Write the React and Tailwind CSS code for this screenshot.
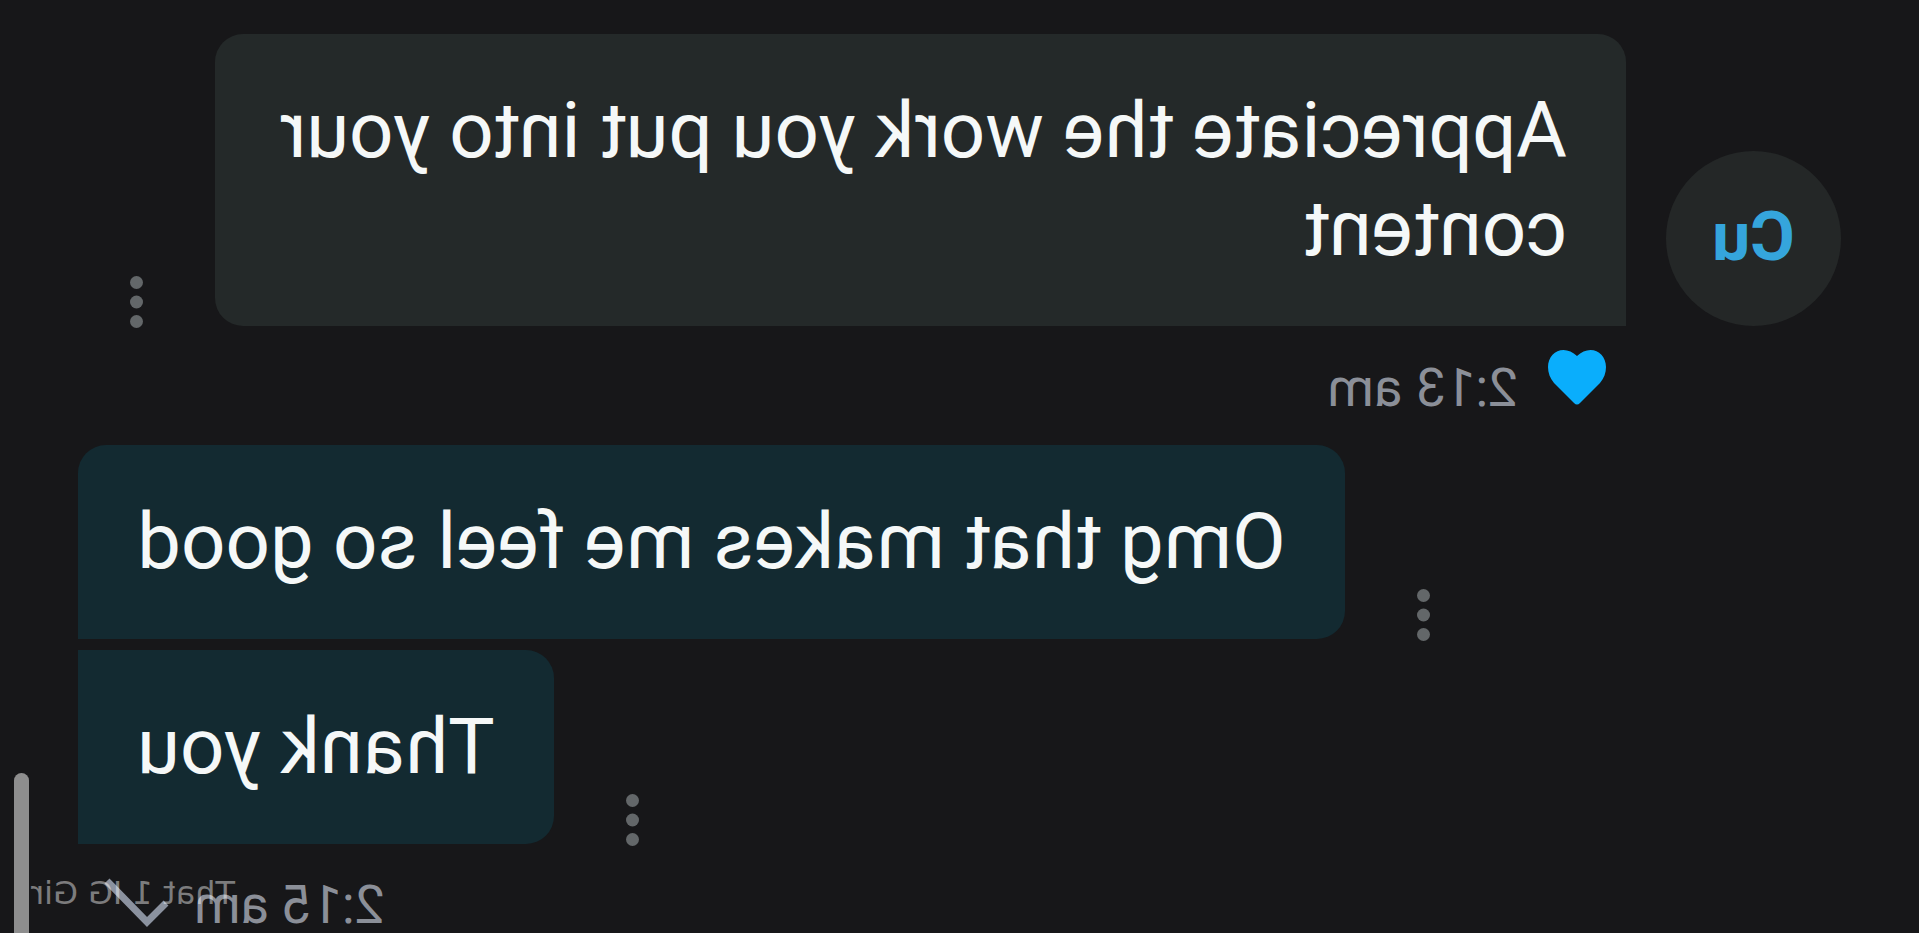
import React from 'react'

const replies = [
  { id: 1, text: 'Omg that makes me feel so good', corners: 'rounded-[28px] rounded-br-none' },
  { id: 2, text: 'Thank you', corners: 'rounded-l-[28px]' },
]

function MoreButton() {
  return (
    <button type="button" aria-label="Message options" className="block shrink-0 -mb-0.5">
      <svg width="13" height="52" viewBox="0 0 13 52" className="block fill-[#636769]">
        <circle cx="6.5" cy="6.5" r="6.5" />
        <circle cx="6.5" cy="26" r="6.5" />
        <circle cx="6.5" cy="45.5" r="6.5" />
      </svg>
    </button>
  )
}

function Bubble({ className, children }) {
  return (
    <p className={`px-[59px] py-12 text-[78px] leading-[98px] ${className}`}>{children}</p>
  )
}

function Time({ children }) {
  return <time className="block text-[53px] leading-[56px] text-[#8b8f98]">{children}</time>
}

export default function App() {
  return (
    // The whole conversation is shown flipped, as in a front camera preview
    <main className="relative h-screen overflow-hidden -scale-x-100 bg-[#171719] px-[78px] pt-[34px] font-['Roboto',sans-serif] text-[#f5f8f8]">

      {/* Incoming */}
      <div className="flex items-end gap-10">
        <div className="flex size-[175px] shrink-0 items-center justify-center rounded-full bg-[#242727] pb-1 text-[68px] font-bold text-[#35a5dc]">
          Cu
        </div>
        <Bubble className="max-w-[1411px] rounded-[28px] rounded-bl-none bg-[#242929]">
          Appreciate the work you put into your content
        </Bubble>
        <div className="ml-8">
          <MoreButton />
        </div>
      </div>

      <div className="mt-6 flex items-start gap-[30px] pl-[235px]">
        <svg width="58" height="55" viewBox="0 0 58 55" role="img" aria-label="Liked" className="fill-[#0aaefc]">
          <path d="M29 6C25 2 20 0 15.5 0C7 0 0 7 0 17C0 23 2 28 6 33L26 53Q29 56 32 53L52 33C56 28 58 23 58 17C58 7 51 0 42.5 0C38 0 33 2 29 6Z" />
        </svg>
        <div className="pt-[10px]">
          <Time>2:13 am</Time>
        </div>
      </div>

      {/* Outgoing */}
      <div className="mt-[29px] flex flex-col gap-[11px]">
        {replies.map(({ id, text, corners }) => (
          <div key={id} className="flex items-end justify-end gap-[72px]">
            <MoreButton />
            <Bubble className={`bg-[#132a31] ${corners}`}>{text}</Bubble>
          </div>
        ))}
      </div>

      <div className="mt-[33px] flex items-start justify-end gap-6 pr-[26px]">
        <Time>2:15 am</Time>
        <svg width="66" height="56" viewBox="0 0 66 56" fill="none" className="stroke-[#8b929f]" strokeWidth="7" aria-label="Sent" role="img">
          <path d="M4 26L23 45L63 4" />
        </svg>
      </div>

      <div className="absolute bottom-4 left-[1684px] whitespace-nowrap font-['DejaVu_Sans',sans-serif] text-[32px] leading-[48px] text-[#ffffff70]">
        That 1 IG Girl
      </div>
      <div className="absolute bottom-0 right-[14px] h-40 w-[15px] rounded-t-full bg-[#8e8e8e]" />
    </main>
  )
}
